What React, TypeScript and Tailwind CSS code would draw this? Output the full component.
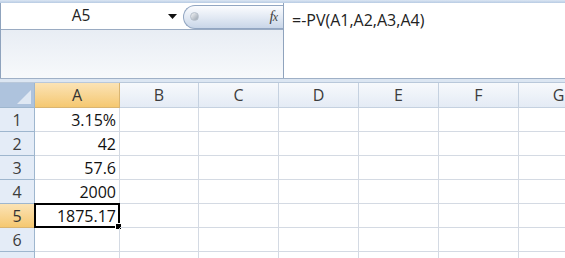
import React from "react";

const cols = ["A", "B", "C", "D", "E", "F", "G"];
const colClasses = [
  "w-[85px]",
  "w-[79px]",
  "w-[80px]",
  "w-[80px]",
  "w-[80px]",
  "w-[80px]",
  "w-[80px]",
];
const values: Record<number, string> = {
  1: "3.15%",
  2: "42",
  3: "57.6",
  4: "2000",
  5: "1875.17",
};

export default function App() {
  return (
    <div
      className="w-[565px] h-[258px] overflow-hidden bg-white text-[#222] relative"
      style={{ fontFamily: '"Open Sans", "Liberation Sans", sans-serif' }}
    >
      {/* top strip */}
      <div className="h-[3px] bg-gradient-to-b from-[#dbe6f3] to-[#b8cbe3]" />
      {/* formula area */}
      <div className="h-[75px] flex">
        <div className="w-[284px] shrink-0 flex flex-col border-l border-[#8fa3bd] border-r">
          <div className="h-[27px] flex items-center bg-white border-b border-[#9aabc2]">
            <div className="w-[160px] flex items-center justify-center text-[15.5px]">
              A5
            </div>
            <div className="w-[22px] flex items-center justify-center">
              <svg width="9" height="5" viewBox="0 0 9 5">
                <path d="M0 0 H9 L4.5 5 Z" fill="#111" />
              </svg>
            </div>
            <div className="flex-1 h-[24px] mt-[1px] rounded-l-full border border-r-0 border-[#92a6c2] bg-gradient-to-b from-[#fbfcfe] via-[#e3eaf4] to-[#c9d6e8] flex items-center justify-between pl-[6px] pr-[6px]">
              <div className="w-[9px] h-[9px] rounded-full bg-gradient-to-br from-[#f4f6f8] to-[#9aa4b0] border border-[#b7c0cb]" />
              <span
                className="italic text-[15px] text-[#444] tracking-[-1px]"
                style={{ fontFamily: '"Liberation Serif", serif' }}
              >
                f<span className="text-[12px]">x</span>
              </span>
            </div>
          </div>
          <div className="flex-1 bg-gradient-to-b from-[#e8edf4] to-[#f7f9fb]" />
        </div>
        <div className="flex-1 bg-white pl-[8px] pt-[6px] text-[16px] leading-[22px]">
          =-PV(A1,A2,A3,A4)
        </div>
      </div>
      <div className="h-[1px] bg-[#9fb0c6]" />
      <div className="h-[4px] bg-[#dce6f2] border-b border-[#b9c8da]" />
      {/* header row */}
      <div className="flex h-[25px]">
        <div className="w-[35px] shrink-0 border-r border-b border-[#9eb6ce] bg-[#aec3dd] relative">
          <svg className="absolute right-[3px] bottom-[3px]" width="14" height="14" viewBox="0 0 14 14">
            <path d="M14 0 V14 H0 Z" fill="#dfe8f3" />
          </svg>
        </div>
        {cols.map((c, i) => (
          <div
            key={c}
            className={`${colClasses[i]} shrink-0 border-r border-b flex items-center justify-center text-[16px] ${
              i === 0
                ? "bg-gradient-to-b from-[#fbe3b5] to-[#f5c870] border-[#d9b572] text-[#333]"
                : "bg-gradient-to-b from-[#f7f9fc] to-[#e4ebf5] border-[#c5d1e0] text-[#3c3c3c]"
            }`}
          >
            {c}
          </div>
        ))}
      </div>
      {/* rows */}
      {[1, 2, 3, 4, 5, 6, 7].map((r) => (
        <div key={r} className="flex h-[24px]">
          <div
            className={`w-[35px] shrink-0 border-r border-b flex items-center justify-center text-[16px] ${
              r === 5
                ? "bg-gradient-to-b from-[#fbe3b5] to-[#f5c870] border-[#d9b572] text-[#333]"
                : "bg-[#e4ecf7] border-[#9eb6ce] text-[#3c3c3c]"
            }`}
          >
            {r < 7 ? r : ""}
          </div>
          {cols.map((c, i) => (
            <div
              key={c}
              className={`${colClasses[i]} shrink-0 border-r border-b border-[#d4dae3] relative flex items-center justify-end pr-[3px] text-[16px] text-[#111]`}
            >
              {i === 0 && values[r]}
              {i === 0 && r === 5 && (
                <>
                  <div className="absolute left-[-1px] top-[-1px] right-[-1px] bottom-[-1px] border-2 border-black pointer-events-none" />
                  <div className="absolute right-[-3px] bottom-[-3px] w-[5px] h-[5px] bg-black border border-white box-content" />
                </>
              )}
            </div>
          ))}
        </div>
      ))}
    </div>
  );
}
